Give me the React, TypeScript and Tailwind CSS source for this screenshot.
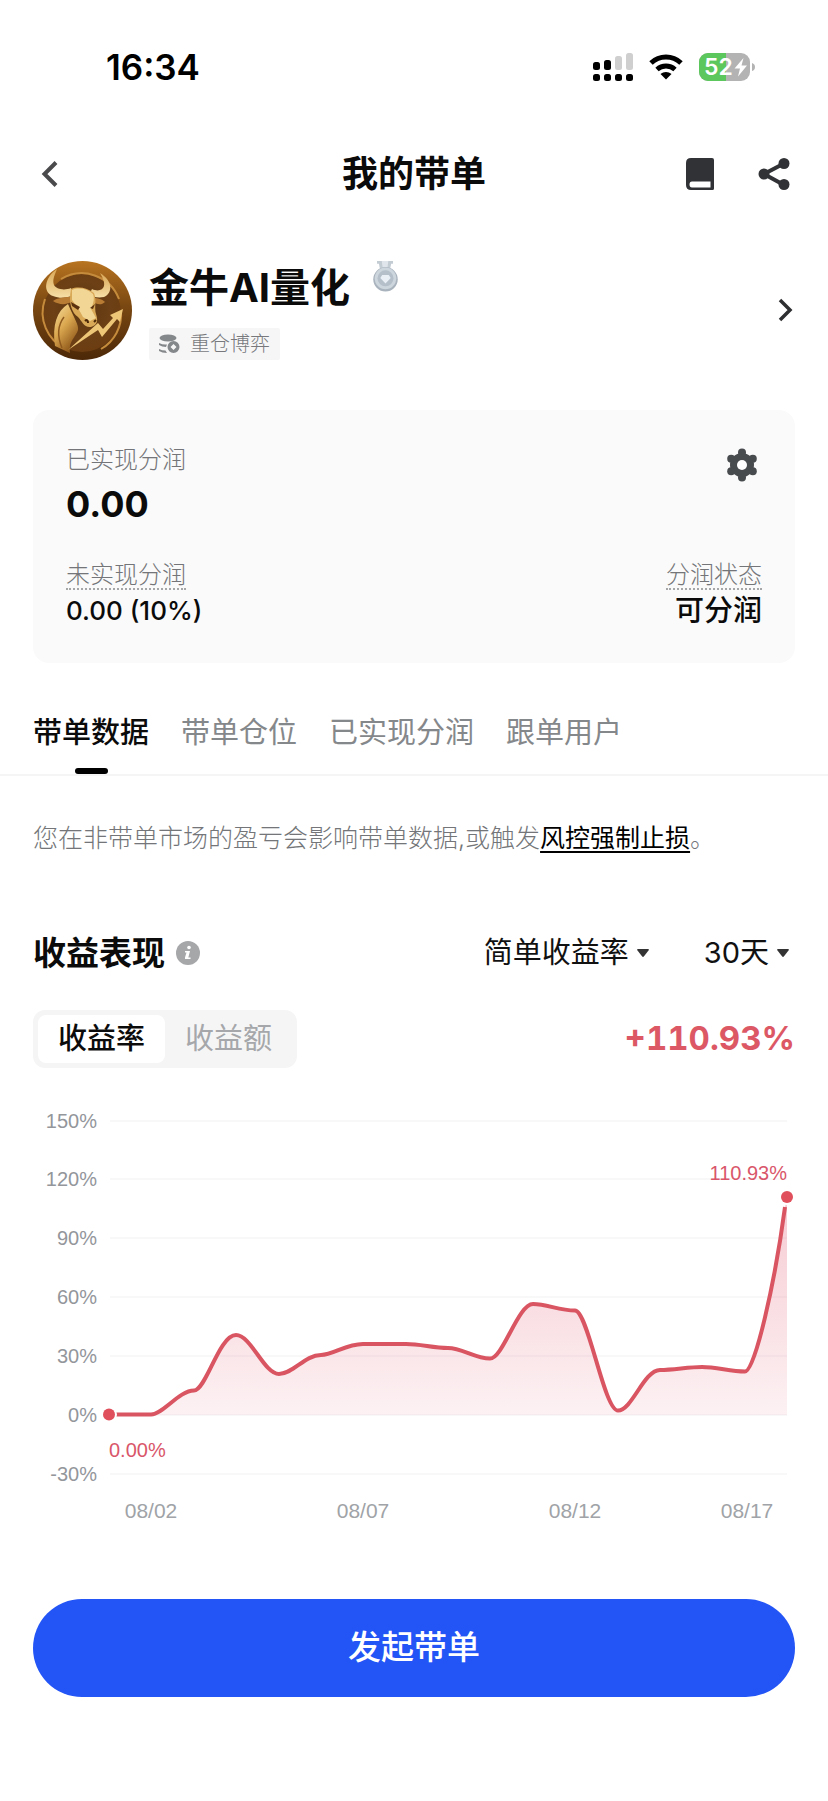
import { useState } from "react";

const tabs = ["带单数据", "带单仓位", "已实现分润", "跟单用户"];
const modes = ["收益率", "收益额"];

const yAxis = [
  { label: "150%", y: 21 },
  { label: "120%", y: 79 },
  { label: "90%", y: 138 },
  { label: "60%", y: 197 },
  { label: "30%", y: 256 },
  { label: "0%", y: 315 },
  { label: "-30%", y: 374 },
];

const xAxis = [
  { label: "08/02", x: 118 },
  { label: "08/07", x: 330 },
  { label: "08/12", x: 542 },
  { label: "08/17", x: 714 },
];

const curve =
  "C130 314.5 146 290.5 161 290.5 C173 290.5 186 235 203 235 C218 235 231 274 246 274 C260 274 272 255 288 255 C300 255 313 244 330 244 L373 244 C388 244 400 248 415 248 C429 248 442 258.5 457 258.5 C470 258.5 485 204 500 204 C514 204 526 210.5 542 210.5 C555 210.5 571 310.5 585 310.5 C599 310.5 611 270 627 270 C641 270 655 267 669 267 C684 267 697 271.5 712 271.5 C722 271.5 742 182 752 107";

function StatusIcons() {
  return (
    <div className="flex items-center gap-4">
      {/* Signal */}
      <svg width="40" height="28" viewBox="0 0 40 28">
        <rect x="0" y="9" width="7" height="8" rx="2.5" />
        <rect x="11" y="7" width="7" height="10" rx="2.5" />
        <rect x="22" y="3" width="7" height="14" rx="2.5" fill="#cfcfcf" />
        <rect x="33" y="0" width="7" height="17" rx="2.5" fill="#cfcfcf" />
        {[0, 11, 22, 33].map((x) => (
          <rect key={x} x={x} y="21" width="7" height="7" rx="2.5" />
        ))}
      </svg>
      {/* Wifi */}
      <svg width="34" height="26" viewBox="0 0 34 26" fill="none">
        <path d="M2 9C10.5 1 23.500 1 32 9" stroke="#000" strokeWidth="5" />
        <path d="M8 15.500C13 10.800 21 10.800 26 15.500" stroke="#000" strokeWidth="4.800" />
        <path d="M11.500 20C14.500 17.300 19.500 17.300 22.500 20L17 25.500Z" fill="#000" />
      </svg>
      {/* Battery */}
      <svg width="57" height="28" viewBox="0 0 57 28">
        <defs>
          <clipPath id="battery">
            <rect width="51" height="28" rx="9" />
          </clipPath>
        </defs>
        <g clipPath="url(#battery)">
          <rect width="51" height="28" fill="#b3b3b3" />
          <rect width="27" height="28" fill="#5cc75c" />
        </g>
        <path d="M53 10Q56 11 56 14Q56 17 53 18Z" fill="#b3b3b3" />
        <text x="5" y="22" fontSize="23" fontWeight="600" fill="#fff">
          52
        </text>
        <path d="M44.500 5L35.500 15.500H41L39 23.500L48 12.500H42.500Z" fill="#fff" />
      </svg>
    </div>
  );
}

function Avatar() {
  return (
    <svg className="size-[99px] shrink-0" viewBox="0 0 99 99" role="img" aria-label="金牛AI量化">
      <defs>
        <radialGradient id="coin" cx="50%" cy="45%" r="60%">
          <stop offset="0" stopColor="#5a3512" />
          <stop offset=".6" stopColor="#6d4015" />
          <stop offset="1" stopColor="#6b3c10" />
        </radialGradient>
        <linearGradient id="rim" x1="0" y1="0" x2="0" y2="1">
          <stop offset="0" stopColor="#b87420" />
          <stop offset=".45" stopColor="#7a4812" />
          <stop offset="1" stopColor="#4c2808" />
        </linearGradient>
        <linearGradient id="gold" x1="0" y1="0" x2=".6" y2="1">
          <stop offset="0" stopColor="#f8e0a0" />
          <stop offset=".5" stopColor="#dba850" />
          <stop offset="1" stopColor="#8c5518" />
        </linearGradient>
        <linearGradient id="horn" x1="0" y1="0" x2="0" y2="1">
          <stop offset="0" stopColor="#d9a756" />
          <stop offset="1" stopColor="#f6dfa6" />
        </linearGradient>
      </defs>
      <circle cx="49.500" cy="49.500" r="49.500" fill="url(#rim)" />
      <circle cx="49" cy="52" r="39" fill="url(#coin)" />
      <path d="M12 38A40 40 0 0 0 33 88M68 88A40 40 0 0 0 88 50M28 18A40 40 0 0 1 86 38" fill="none" stroke="#c58b3c" strokeWidth="2" />
      {/* Neck and chest */}
      <path d="M35 43C24 50 19 64 22 85L37 92C35 80 43 76 45 69C46 64 41 57 35 43Z" fill="url(#gold)" />
      <path d="M31 56C25 64 24 75 29 87" fill="none" stroke="#8f5a1e" strokeWidth="1.500" />
      {/* Horns */}
      <path d="M24 8C12 16 9 31 20 35C27 38 35 37 40 34L38 27C31 30 23 28 21 24C19 19 22 13 24 8Z" fill="url(#horn)" />
      <path d="M67 12C80 20 80 32 71 36C65 37 60 36 56 34L59 28C65 31 70 29 71 25C72 20 69 16 67 12Z" fill="url(#horn)" />
      {/* Ears */}
      <path d="M37 36C31 36 24 37 20 40C26 44 33 44 38 41Z" fill="#b97c34" />
      <path d="M60 37C66 37 70 39 72 41C68 45 63 43 60 41Z" fill="#b97c34" />
      {/* Head */}
      <path d="M38 28C45 25 55 27 61 32C64 39 61 46 63 53C65 59 65 64 58 66C51 67 49 60 45 56C39 52 35 42 38 28Z" fill="#d9a957" />
      <path d="M39 29C46 26 55 28 60 33C62 38 60 43 58 48L63 57L57 60L50 56L45 47L39 39Z" fill="#f2d696" />
      <path d="M38 41L47 46L45 49L39 45ZM62 43L57 47L60 48Z" fill="#5b3210" />
      <path d="M52 60C54 58 55 60 55 62M61 61L63 59" fill="none" stroke="#4b2607" strokeWidth="2" />
      {/* Rising arrow */}
      <path d="M35 89L65 69L69 76L84 58L87 61L90 48L77 54L80 57L70 68L65 62Z" fill="#eec678" />
    </svg>
  );
}

function Medal() {
  return (
    <svg width="27" height="32" viewBox="0 0 28 34" role="img" aria-label="银牌">
      <path d="M5 1H22V4H20L19 9H8L7 4H5Z" fill="#c3cbd3" />
      <path d="M10 1H17L16 9H11Z" fill="#dfe5ea" />
      <circle cx="14" cy="20.500" r="13" fill="#a9b3bd" />
      <circle cx="14" cy="19.500" r="11.500" fill="#cdd5dd" />
      <circle cx="14" cy="19.500" r="8.500" fill="#b4bfca" />
      <path d="M10.500 16H17.500L19.500 19L14 25L8.500 19Z" fill="#e9eff5" />
    </svg>
  );
}

function Gear() {
  return (
    <svg width="32" height="34" viewBox="0 0 32 34">
      <g fill="#484b4e">
        <circle cx="16" cy="17" r="12" />
        <circle cx="16" cy="4.500" r="4" />
        <circle cx="26.800" cy="10.800" r="4" />
        <circle cx="26.800" cy="23.200" r="4" />
        <circle cx="16" cy="29.500" r="4" />
        <circle cx="5.200" cy="23.200" r="4" />
        <circle cx="5.200" cy="10.800" r="4" />
      </g>
      <circle cx="16" cy="17" r="5" fill="#fff" />
    </svg>
  );
}

function Caret() {
  return (
    <svg className="pointer-events-none absolute right-0 top-1/2 -translate-y-1/2" width="12" height="9" viewBox="0 0 12 9">
      <path d="M1 .5H11Q12.500 .5 11.500 2L7 7.800Q6 9 5 7.800L.5 2Q-.5 .5 1 .5Z" fill="#333" />
    </svg>
  );
}

function Picker({ label, options }: { label: string; options: string[] }) {
  return (
    <div className="relative">
      <select
        aria-label={label}
        className="field-sizing-content appearance-none bg-transparent pr-5 text-[29px] leading-[46px] text-[#111]"
      >
        {options.map((option) => (
          <option key={option}>{option}</option>
        ))}
      </select>
      <Caret />
    </div>
  );
}

function Chart() {
  return (
    <svg
      className="mt-8 block w-full font-['Liberation_Sans',sans-serif]"
      viewBox="0 0 762 430"
      role="img"
      aria-label="收益率走势"
    >
      <defs>
        <linearGradient id="area" gradientUnits="userSpaceOnUse" x1="0" y1="97" x2="0" y2="315">
          <stop offset="0" stopColor="#e0526a" stopOpacity=".3" />
          <stop offset="1" stopColor="#e0526a" stopOpacity=".08" />
        </linearGradient>
      </defs>
      {yAxis.map(({ label, y }) => (
        <g key={label}>
          <line x1="77" x2="754" y1={y} y2={y} stroke="#f8f8f9" strokeWidth="2" />
          <text x="64" y={y + 7} textAnchor="end" fontSize="20" fill="#93969b">
            {label}
          </text>
        </g>
      ))}
      {xAxis.map(({ label, x }) => (
        <text key={label} x={x} y="418" textAnchor="middle" fontSize="21" fill="#a0a3a7">
          {label}
        </text>
      ))}
      <path d={`M76 314.5 L118 314.5 ${curve} L754 97 L754 315 L76 315 Z`} fill="url(#area)" />
      <path d={`M76 314.5 L118 314.5 ${curve}`} fill="none" stroke="#d95562" strokeWidth="4" />
      <circle cx="76" cy="314.500" r="6" fill="#e0505c" stroke="#fff" strokeWidth="4" paintOrder="stroke" />
      <circle cx="754" cy="97" r="6" fill="#e0505c" stroke="#fff" strokeWidth="4" paintOrder="stroke" />
      <text x="76" y="357" fontSize="20" fill="#d9566a">
        0.00%
      </text>
      <text x="754" y="80" textAnchor="end" fontSize="20" fill="#d9566a">
        110.93%
      </text>
    </svg>
  );
}

export default function App() {
  const [tab, setTab] = useState(tabs[0]);
  const [mode, setMode] = useState(modes[0]);

  return (
    <div className="min-h-screen bg-white pb-[104px] font-['Inter','Noto_Sans_CJK_SC',sans-serif] text-[#0b0b0b]">
      {/* Status bar */}
      <div className="flex h-[134px] items-center justify-between pl-[106px] pr-[72px]">
        <span className="text-[35px] font-semibold text-black">16:34</span>
        <StatusIcons />
      </div>

      {/* Header */}
      <header className="grid h-20 grid-cols-[1fr_auto_1fr] items-center px-[38px]">
        <button aria-label="返回" className="justify-self-start">
          <svg width="24" height="32" viewBox="0 0 24 32" fill="none">
            <path d="M18 4.500L6.500 16L18 27.500" stroke="#4a4a4c" strokeWidth="4" />
          </svg>
        </button>
        <h1 className="text-[36px] font-bold leading-[48px]">我的带单</h1>
        <div className="flex items-center gap-11 justify-self-end">
          <button aria-label="教程">
            <svg width="28" height="32" viewBox="0 0 28 32">
              <path
                d="M5 0H26Q28 0 28 2V30.500Q28 32 26.500 32H5Q0 32 0 27V5Q0 0 5 0ZM6 23.500Q3.500 23.500 3.500 26.500Q3.500 29.500 6 29.500H24.500V23.500Z"
                fill="#303235"
                fillRule="evenodd"
              />
            </svg>
          </button>
          <button aria-label="分享">
            <svg width="32" height="32" viewBox="0 0 32 32">
              <path d="M26 5.500L6 16L26 27" fill="none" stroke="#303235" strokeWidth="4" />
              <circle cx="26" cy="5.500" r="5.500" fill="#303235" />
              <circle cx="6" cy="16" r="5.500" fill="#303235" />
              <circle cx="26" cy="26.500" r="5.500" fill="#303235" />
            </svg>
          </button>
        </div>
      </header>

      {/* Trader */}
      <section className="mt-[46px] flex items-center px-[33px]">
        <Avatar />
        <div className="ml-[17px] flex flex-col items-start">
          <div className="flex items-start gap-[22px]">
            <h2 className="text-[40px] font-bold leading-[56px]">金牛AI量化</h2>
            <Medal />
          </div>
          <span className="mt-3 flex h-8 items-center gap-2.5 rounded-xs bg-[#f6f6f7] px-2.5 text-[20px] font-light text-[#77797c]">
            <svg width="21" height="20" viewBox="0 0 21 20" fill="#85888b">
              <ellipse cx="9" cy="4" rx="8.500" ry="3.500" />
              <path d="M0 9Q4 11 8 10.500L7 13Q3 13 0 11ZM0 15Q3 16.500 6.500 16.500L8 19Q3 19 0 17Z" />
              <path d="M14.500 7A6 6 0 1 0 14.500 19A6 6 0 1 0 14.500 7ZM14.500 10L17.500 13L14.500 16L11.500 13Z" fillRule="evenodd" />
            </svg>
            重仓博弈
          </span>
        </div>
        <button aria-label="查看资料" className="ml-auto">
          <svg width="20" height="28" viewBox="0 0 20 28" fill="none">
            <path d="M5 4L15 14L5 24" stroke="#2e2f31" strokeWidth="3.500" />
          </svg>
        </button>
      </section>

      {/* Profit card */}
      <section className="mx-[33px] mt-[50px] rounded-2xl bg-[#fafafa] px-[33px] py-[34px]">
        <div className="flex items-start justify-between">
          <div>
            <p className="text-[24px] font-light leading-8 text-[#737578]">已实现分润</p>
            <p className="mt-1 text-[36px] font-bold leading-[48px]">0.00</p>
          </div>
          <button aria-label="分润设置" className="mt-1 mr-1">
            <Gear />
          </button>
        </div>
        <div className="mt-[34px] flex justify-between">
          <div className="flex flex-col items-start">
            <p className="border-b-2 border-dotted border-[#a5a6a8] text-[24px] font-light leading-[26px] text-[#737578]">未实现分润</p>
            <p className="mt-[3px] text-[26px] font-medium leading-9">0.00 (10%)</p>
          </div>
          <div className="flex flex-col items-end">
            <p className="border-b-2 border-dotted border-[#a5a6a8] text-[24px] font-light leading-[26px] text-[#737578]">分润状态</p>
            <p className="mt-[3px] text-[29px] font-medium leading-9">可分润</p>
          </div>
        </div>
      </section>

      {/* Tabs */}
      <nav className="mt-10 flex h-[73px] gap-8 border-b-2 border-[#f5f5f6] px-[33px]">
        {tabs.map((name) => (
          <button
            key={name}
            onClick={() => setTab(name)}
            className={`flex flex-col items-center text-[29px] leading-[60px] ${name === tab ? "font-medium" : "text-[#85888b]"}`}
          >
            {name}
            {name === tab && <span className="mt-[5px] h-1.5 w-[33px] rounded-sm bg-black" />}
          </button>
        ))}
      </nav>

      <main className="px-[33px]">
        <p className="mt-[42px] text-[25px] font-light leading-10 text-[#737578]">
          您在非带单市场的盈亏会影响带单数据,或触发
          <a href="#risk" className="font-normal text-black underline decoration-2 underline-offset-4">
            风控强制止损
          </a>
          。
        </p>

        <div className="mt-[72px] flex items-center justify-between">
          <h3 className="flex items-center gap-[11px] text-[33px] font-bold leading-[46px]">
            收益表现
            <svg width="24" height="24" viewBox="0 0 24 24">
              <circle cx="12" cy="12" r="12" fill="#a5a7a9" />
              <circle cx="13" cy="6.500" r="1.800" fill="#fff" />
              <path d="M9 10H14L12.300 16.500H14.500V18H9V16.500L10.500 11.500H9Z" fill="#fff" />
            </svg>
          </h3>
          <div className="flex items-center gap-[55px] pr-1.5">
            <Picker label="收益类型" options={["简单收益率", "时间加权"]} />
            <Picker label="时间范围" options={["30天", "7天", "90天"]} />
          </div>
        </div>

        <div className="mt-[34px] flex items-center justify-between">
          <div className="flex rounded-xl bg-[#f5f5f6] p-[5px]">
            {modes.map((name) => (
              <button
                key={name}
                onClick={() => setMode(name)}
                className={`h-12 rounded-lg px-5 text-[29px] leading-10 ${name === mode ? "bg-white font-medium" : "text-[#a5a7aa]"}`}
              >
                {name}
              </button>
            ))}
          </div>
          <span className="text-[33px] font-bold tabular-nums text-[#dc5865]">+110.93%</span>
        </div>

        <Chart />

        <button className="mt-[69px] h-[98px] w-full rounded-full bg-[#2254f6] text-[33px] font-medium text-white">
          发起带单
        </button>
      </main>
    </div>
  );
}
